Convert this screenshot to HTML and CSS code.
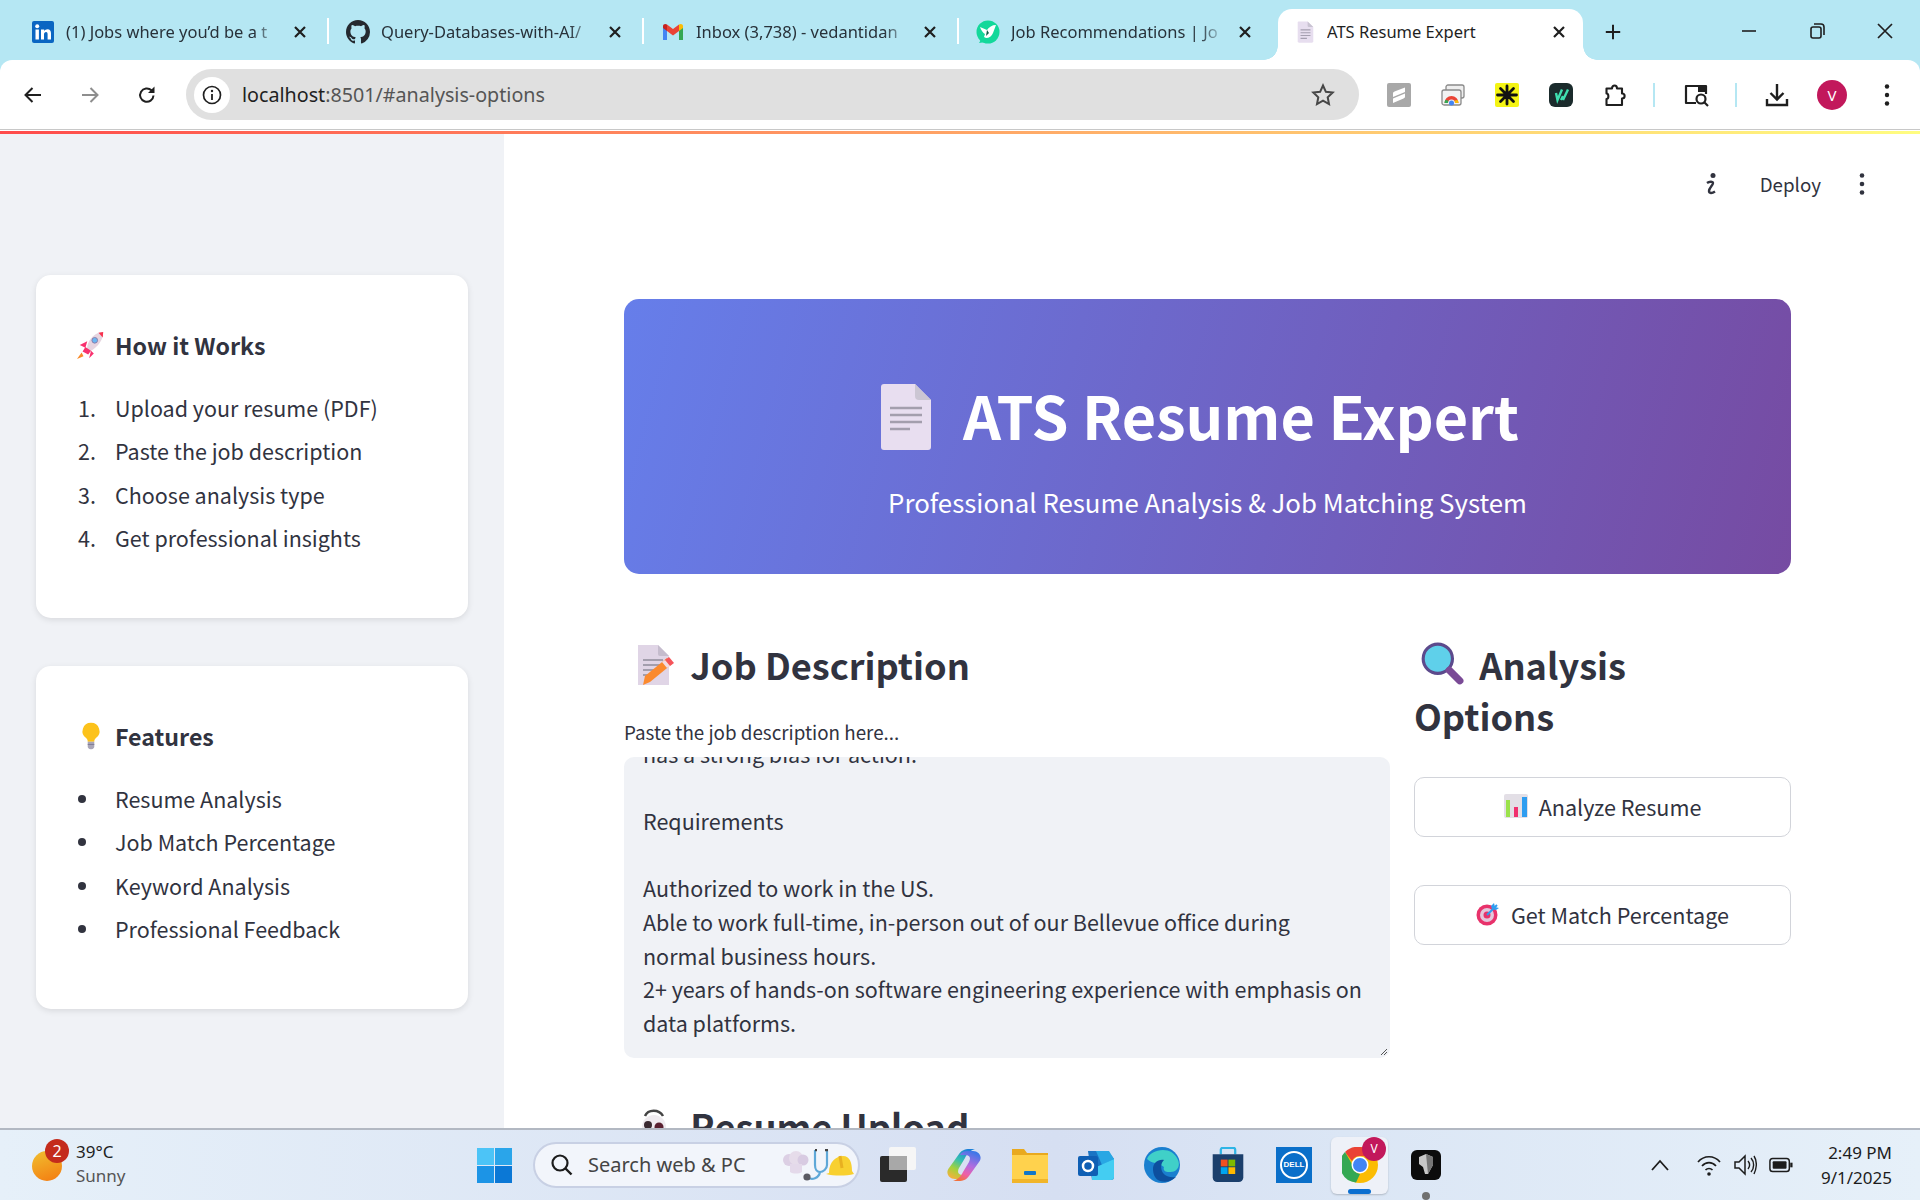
FILE: index.html
```html
<!DOCTYPE html>
<html lang="en">
<head>
<meta charset="utf-8">
<title>ATS Resume Expert</title>
<link rel="stylesheet" href="styles.css">
</head>
<body>
<div class="screen">
  <header class="tabstrip">
    <div class="tab">
      <svg class="fav" viewBox="0 0 24 24"><rect x="1" y="1" width="22" height="22" rx="2" fill="#0a66c2"/><rect x="4.500" y="9.500" width="3.400" height="10" fill="#fff"/><circle cx="6.200" cy="6.200" r="2" fill="#fff"/><path d="M10 9.500h3.200v1.500c.7-1.100 1.900-1.800 3.200-1.800 2.700 0 3.600 1.700 3.600 4.300v6h-3.400v-5.300c0-1.300-.3-2.300-1.500-2.300-1.300 0-2.100.9-2.100 2.400v5.200H10z" fill="#fff"/></svg>
      <span class="tab-title">(1) Jobs where you’d be a t</span>
      <svg class="tab-x" viewBox="0 0 14 14"><path d="M2 2l10 10M12 2L2 12" stroke="#1f1f1f" stroke-width="2.200"/></svg>
    </div>
    <div class="tab">
      <svg class="fav" viewBox="0 0 16 16"><path fill="#24292f" d="M8 0C3.580 0 0 3.580 0 8c0 3.540 2.290 6.530 5.470 7.590.4.070.55-.17.55-.38 0-.19-.01-.82-.01-1.490-2.010.37-2.530-.49-2.690-.94-.09-.23-.48-.94-.82-1.130-.28-.15-.68-.52-.01-.53.63-.01 1.080.58 1.230.82.72 1.210 1.870.87 2.330.66.070-.52.280-.87.510-1.070-1.780-.2-3.640-.89-3.640-3.950 0-.87.310-1.590.820-2.150-.08-.2-.36-1.020.08-2.120 0 0 .67-.21 2.200.82.640-.18 1.320-.27 2-.27s1.360.09 2 .27c1.530-1.040 2.200-.82 2.200-.82.440 1.100.160 1.920.080 2.120.510.560.820 1.270.820 2.150 0 3.070-1.870 3.750-3.650 3.950.290.250.540.730.540 1.480 0 1.070-.01 1.930-.01 2.200 0 .21.150.460.550.380A8.010 8.010 0 0 0 16 8c0-4.420-3.580-8-8-8z"/></svg>
      <span class="tab-title">Query-Databases-with-AI/</span>
      <svg class="tab-x" viewBox="0 0 14 14"><path d="M2 2l10 10M12 2L2 12" stroke="#1f1f1f" stroke-width="2.200"/></svg>
    </div>
    <div class="tab">
      <svg class="fav" viewBox="0 0 24 24"><path d="M2 6v14h4V10z" fill="#4285f4"/><path d="M22 6v14h-4V10z" fill="#34a853"/><path d="M18 4.500V11l4-3V6c0-1.800-2.200-2.800-4-1.500z" fill="#fbbc04"/><path d="M6 11V4.500l6 4.500 6-4.500V11l-6 4.500z" fill="#ea4335"/><path d="M2 6c0-1.800 2.200-2.800 4-1.500V11L2 8z" fill="#c5221f"/></svg>
      <span class="tab-title">Inbox (3,738) - vedantidan</span>
      <svg class="tab-x" viewBox="0 0 14 14"><path d="M2 2l10 10M12 2L2 12" stroke="#1f1f1f" stroke-width="2.200"/></svg>
    </div>
    <div class="tab">
      <svg class="fav" viewBox="0 0 24 24"><circle cx="12" cy="12" r="11.500" fill="#13d89a"/><path d="M3 23l3-5 4 4z" fill="#13d89a"/><path d="M4 7l7 3c2-3 5-5 9-5l-3 8c-1 3-4 5-7 5l-2-1 1-3c-2-1-4-4-5-7z" fill="#fff"/><path d="M11 10l2 3-3 3z" fill="#0c5c46"/></svg>
      <span class="tab-title">Job Recommendations | Jo</span>
      <svg class="tab-x" viewBox="0 0 14 14"><path d="M2 2l10 10M12 2L2 12" stroke="#1f1f1f" stroke-width="2.200"/></svg>
    </div>
    <div class="tab tab-active">
      <svg class="fav fav-doc" viewBox="0 0 24 30"><path d="M2 0h13l8 8v20a2 2 0 0 1-2 2H3a2 2 0 0 1-2-2V1z" fill="#e7deef"/><path d="M15 0l8 8h-6a2 2 0 0 1-2-2z" fill="#c9c3d2"/><path d="M5 12h14M5 16h14M5 20h14M5 24h9" stroke="#a59fb0" stroke-width="1.500"/></svg>
      <span class="tab-title">ATS Resume Expert</span>
      <svg class="tab-x" viewBox="0 0 14 14"><path d="M2 2l10 10M12 2L2 12" stroke="#1f1f1f" stroke-width="2.200"/></svg>
    </div>
    <svg class="newtab" viewBox="0 0 20 20"><path d="M10 2v16M2 10h16" stroke="#1f1f1f" stroke-width="2.200"/></svg>
    <div class="winctl">
      <svg viewBox="0 0 20 20"><path d="M3 10h14" stroke="#1f1f1f" stroke-width="1.600"/></svg>
      <svg viewBox="0 0 20 20"><rect x="4" y="6" width="10" height="11" rx="2" fill="none" stroke="#1f1f1f" stroke-width="1.600"/><path d="M7 3h7a3 3 0 0 1 3 3v8" fill="none" stroke="#1f1f1f" stroke-width="1.600"/></svg>
      <svg viewBox="0 0 20 20"><path d="M3 3l14 14M17 3L3 17" stroke="#1f1f1f" stroke-width="1.700"/></svg>
    </div>
  </header>

  <nav class="toolbar">
    <svg class="nav-ic" viewBox="0 0 20 20"><path d="M18 10H3M9.500 3L2.500 10l7 7" fill="none" stroke="#1f1f1f" stroke-width="2"/></svg>
    <svg class="nav-ic" viewBox="0 0 20 20"><path d="M2 10h15M10.500 3l7 7-7 7" fill="none" stroke="#8e8e8e" stroke-width="2"/></svg>
    <svg class="nav-ic" viewBox="0 0 20 20"><path d="M16.500 10.500a6.700 6.700 0 1 1-2-5.200" fill="none" stroke="#1f1f1f" stroke-width="2"/><path d="M17.500 1.500v6.500H11z" fill="#1f1f1f"/></svg>
    <div class="omnibox">
      <span class="site-info"><svg viewBox="0 0 20 20"><circle cx="10" cy="10" r="8.500" fill="none" stroke="#1f1f1f" stroke-width="1.700"/><path d="M10 9v6" stroke="#1f1f1f" stroke-width="1.800"/><circle cx="10" cy="6" r="1.200" fill="#1f1f1f"/></svg></span>
      <span class="url"><b>localhost</b>:8501/#analysis-options</span>
      <svg class="star" viewBox="0 0 24 24"><path d="M12 2.500l2.900 6.300 6.800.8-5 4.700 1.300 6.800-6-3.400-6 3.400 1.300-6.800-5-4.700 6.800-.8z" fill="none" stroke="#474747" stroke-width="2"/></svg>
    </div>
    <div class="exts">
      <svg class="ext" viewBox="0 0 24 24"><rect width="24" height="24" rx="2" fill="#a8a8a8"/><path d="M6 10.500c0-1 .5-1.500 1.500-2L18 4.500v4.500L6 14zM6 15.500L18 10.500v3c0 1-.5 1.500-1.500 2L6 20z" fill="#fff"/></svg>
      <svg class="ext" viewBox="0 0 24 24"><rect x="5" y="2" width="18" height="13" rx="2" fill="#eee" stroke="#8a8a8a" stroke-width="1.300"/><rect x="1" y="7" width="19" height="15" rx="2" fill="#f2f2f2" stroke="#8a8a8a" stroke-width="1.300"/><path d="M3.500 20a7 7 0 0 1 14 0h-3.500a3.500 3.500 0 0 0-7 0z" fill="#ea4335"/><path d="M14 20h3.500c0-1-.2-2-.8-3l-3 .5z" fill="#fbbc04"/><path d="M3.500 20H7l.3-2.500-3-.5c-.5 1-.8 2-.8 3z" fill="#34a853"/><circle cx="10.500" cy="20" r="2.500" fill="#4285f4"/></svg>
      <svg class="ext" viewBox="0 0 24 24"><rect width="24" height="24" rx="2" fill="#f4f414"/><path d="M12 12V3M12 12v9M12 12L5.500 5.500M12 12l6.500-6.500M12 12l-6.500 6.500M12 12l6.500 6.500M12 12H2.500M12 12h9.500" stroke="#111" stroke-width="2.800" stroke-linecap="round"/></svg>
      <svg class="ext" viewBox="0 0 24 24"><rect width="24" height="24" rx="6" fill="#1b2b2c"/><path d="M7 10l1.500 7L13 6.500M14 17l5-10.500M12 17l2-4" fill="none" stroke="#3fe0b0" stroke-width="2.400"/></svg>
      <svg class="ext" viewBox="0 0 24 24"><path d="M3.500 5.500h5.500c0-4 5-4 5 0h5v5c3.500 0 3.500 5 0 5v6.500H3.500v-6c2.500 0 2.500-5.500 0-5.500z" fill="none" stroke="#1f1f1f" stroke-width="2.100" stroke-linejoin="round"/></svg>
      <i class="tb-sep"></i>
      <svg class="ext ext-wide" viewBox="0 0 26 24"><path d="M13 20H3V3h20v8" fill="none" stroke="#1f1f1f" stroke-width="2.200" stroke-linejoin="round"/><rect x="15" y="2" width="8" height="7" fill="#1f1f1f"/><circle cx="18" cy="16" r="4.500" fill="none" stroke="#1f1f1f" stroke-width="2.200"/><path d="M21 19l4 4" stroke="#1f1f1f" stroke-width="2.200"/></svg>
      <i class="tb-sep"></i>
      <svg class="ext" viewBox="0 0 24 24"><path d="M12 1v15M5.500 10l6.500 6.500 6.500-6.500" fill="none" stroke="#1f1f1f" stroke-width="2.400"/><path d="M2 16v6h20v-6" fill="none" stroke="#1f1f1f" stroke-width="2.400"/></svg>
      <span class="avatar">V</span>
      <svg class="kebab" viewBox="0 0 6 24"><circle cx="3" cy="3.500" r="2.200" fill="#1f1f1f"/><circle cx="3" cy="12" r="2.200" fill="#1f1f1f"/><circle cx="3" cy="20.500" r="2.200" fill="#1f1f1f"/></svg>
    </div>
  </nav>

  <div class="decoration"></div>

  <div class="app">
    <aside class="sidebar">
      <section class="card">
        <h3 class="card-title">
          <svg class="card-emoji" viewBox="0 0 32 32"><path d="M12 21c-1-5 3-14 12-18l5-1c.5 8-6 16-13 20z" fill="#e6d5e0"/><path d="M24 3l5-1-.5 6z" fill="#f8314e"/><circle cx="20" cy="11" r="3" fill="#6ab7f2" stroke="#8a7aa8"/><path d="M12 12l-8 4 6 3zM16 22l-2 8 5-5zM10 18l-3 5 6 3 3-4z" fill="#f8316e"/><path d="M6 24l-5 7 7-3z" fill="#f98a28"/></svg>
          How it Works
        </h3>
        <ol class="steps numbered">
          <li>Upload your resume (PDF)</li>
          <li>Paste the job description</li>
          <li>Choose analysis type</li>
          <li>Get professional insights</li>
        </ol>
      </section>
      <section class="card">
        <h3 class="card-title">
          <svg class="card-emoji" viewBox="0 0 32 32"><path d="M16 2a9 9 0 0 0-5 16.500c1 1 1.500 2 1.500 3.500h7c0-1.500.5-2.500 1.500-3.500A9 9 0 0 0 16 2z" fill="#fcc21b"/><path d="M12.500 22h7v5a3 3 0 0 1-3 3h-1a3 3 0 0 1-3-3z" fill="#a9a6b8"/><path d="M12.500 25h7" stroke="#7c7990"/></svg>
          Features
        </h3>
        <ul class="steps bullets">
          <li>Resume Analysis</li>
          <li>Job Match Percentage</li>
          <li>Keyword Analysis</li>
          <li>Professional Feedback</li>
        </ul>
      </section>
    </aside>

    <main class="main">
      <div class="st-toolbar">
        <svg class="st-i" viewBox="0 0 14 24"><circle cx="9" cy="3.500" r="2.500" fill="#31333f"/><path d="M3 11c2-1.500 6-2 6 0 0 2-4 5-4 8 0 2.500 3 2.500 6 .5" fill="none" stroke="#31333f" stroke-width="2.400"/></svg>
        <span class="deploy">Deploy</span>
        <svg class="st-kebab" viewBox="0 0 6 24"><circle cx="3" cy="3.500" r="2.300" fill="#31333f"/><circle cx="3" cy="12" r="2.300" fill="#31333f"/><circle cx="3" cy="20.500" r="2.300" fill="#31333f"/></svg>
      </div>
      <div class="hero">
        <h1 class="hero-title">
          <svg class="hero-doc" viewBox="0 0 50 66"><path d="M3 0h31l16 16v47a3 3 0 0 1-3 3H3a3 3 0 0 1-3-3V3a3 3 0 0 1 3-3z" fill="#e8def0"/><path d="M34 0l16 16H38a4 4 0 0 1-4-4z" fill="#cbc6d3"/><path d="M9 24h32M9 31h32M9 38h32M9 45h20" stroke="#a39ead" stroke-width="2.400"/></svg>
          ATS Resume Expert
        </h1>
        <p class="hero-sub">Professional Resume Analysis &amp; Job Matching System</p>
      </div>
      <div class="columns">
        <div class="col-left">
          <h2 class="section-title">
            <svg class="h-emoji" viewBox="0 0 36 42"><path d="M2 1h20l11 11v29H2z" fill="#e0d5e6"/><path d="M22 1l11 11H24a2 2 0 0 1-2-2z" fill="#c5bccd"/><path d="M7 16h20M7 21h20M7 26h14M7 31h8" stroke="#a39ead" stroke-width="1.800"/><path d="M9 32L31 14l5 6-22 18-7 3z" fill="#fb8a2e"/><path d="M29 16l4-3 5 6-4 3z" fill="#f5545a"/><path d="M26 18l3-2 5 6-3 2z" fill="#f3dbe2"/></svg>
            Job Description
          </h2>
          <label class="field-label">Paste the job description here...</label>
          <div class="textarea">
            <div class="textarea-text">has a strong bias for action.

Requirements

Authorized to work in the US.
Able to work full-time, in-person out of our Bellevue office during normal business hours.
2+ years of hands-on software engineering experience with emphasis on data platforms.</div>
            <svg class="grip" viewBox="0 0 8 8"><path d="M7 1L1 7M7 4L4 7" stroke="#555" stroke-width="1"/></svg>
          </div>
          <h2 class="section-title upload-title">
            <svg class="h-emoji" viewBox="0 0 36 42"><circle cx="18" cy="22" r="12" fill="#efebef"/><circle cx="12" cy="20" r="4" fill="#3a2a30"/><circle cx="23" cy="22" r="4.500" fill="#5a2030"/><path d="M9 11c3-7 14-7 18 0" fill="none" stroke="#444" stroke-width="2.500"/></svg>
            Resume Upload
          </h2>
        </div>
        <div class="col-right">
          <h2 class="section-title wrap-title">
            <svg class="h-emoji lens" viewBox="0 0 44 42"><circle cx="18" cy="16" r="14" fill="#5fd0ea" stroke="#5c4a8c" stroke-width="3"/><path d="M29 27l10 10" stroke="#7a4a96" stroke-width="7" stroke-linecap="round"/></svg>
            Analysis Options
          </h2>
          <button class="btn" type="button">
            <svg class="btn-emoji" viewBox="0 0 24 24"><rect width="24" height="24" rx="2" fill="#e3dfe6"/><rect x="2" y="6" width="4" height="17" fill="#9be24b"/><rect x="10" y="13" width="4" height="10" fill="#f0306e"/><rect x="18" y="3" width="5" height="20" fill="#2e9df0"/></svg>
            Analyze Resume
          </button>
          <button class="btn" type="button">
            <svg class="btn-emoji" viewBox="0 0 24 24"><circle cx="11" cy="13" r="10.500" fill="#e8326b"/><circle cx="11" cy="13" r="7" fill="#e3c7dc"/><circle cx="11" cy="13" r="3.500" fill="#e8326b"/><path d="M11 13L21 3" stroke="#2e9df0" stroke-width="2"/><path d="M18 1l1 4 4 1-3 2-4-1-1-3z" fill="#2e9df0"/></svg>
            Get Match Percentage
          </button>
        </div>
      </div>
    </main>
  </div>

  <footer class="taskbar">
    <div class="weather">
      <span class="sun"><span class="badge">2</span></span>
      <div class="weather-text"><span>39°C</span><span class="muted">Sunny</span></div>
    </div>
    <div class="task-center">
      <span class="slot"><svg class="task-ic win" viewBox="0 0 35 35"><rect width="17" height="17" fill="#4cc4f7"/><rect x="18" width="17" height="17" fill="#2aa5ea"/><rect y="18" width="17" height="17" fill="#1c94e6"/><rect x="18" y="18" width="17" height="17" fill="#0b78d6"/></svg></span>
      <div class="search">
        <svg class="search-ic" viewBox="0 0 24 24"><circle cx="10" cy="10" r="7.500" fill="none" stroke="#1c1c1c" stroke-width="2.200"/><path d="M15.500 15.500l6 6" stroke="#1c1c1c" stroke-width="2.400"/></svg>
        <span class="search-text">Search web &amp; PC</span>
        <svg class="search-art" viewBox="0 0 71 32"><circle cx="6" cy="11" r="6" fill="#dccfe4"/><circle cx="13" cy="9" r="7" fill="#e6dcea"/><circle cx="20" cy="11" r="5.500" fill="#d8cbe2"/><path d="M7 15h12v8c-3 2-9 2-12 0z" fill="#e4d9ea"/><path d="M32 1v15c0 4 2 7 5 7s7-3 7-7V1" fill="none" stroke="#5fa8d8" stroke-width="2.200"/><path d="M32 1h2M42 1h3" stroke="#444" stroke-width="2.500"/><path d="M37 23c-1 6-8 9-13 5" fill="none" stroke="#5fa8d8" stroke-width="2.200"/><circle cx="24" cy="28" r="3.600" fill="#5a5a62"/><path d="M46 24C46 12 54 7 60 7c7 0 9 7 9 15l2 3c-8 2-20 2-28 0z" fill="#f8d030"/><path d="M57 7l2 12" stroke="#e8b020" stroke-width="3"/></svg>
      </div>
      <span class="slot"><svg class="task-ic" viewBox="0 0 36 36"><rect x="9" y="0" width="27" height="23" rx="2" fill="#f6f6f6"/><rect x="0" y="9" width="27" height="26" rx="2" fill="#2a2a2a"/><rect x="9" y="9" width="18" height="14" fill="#a8a8a8"/></svg></span>
      <span class="slot"><svg class="task-ic" viewBox="0 0 36 36"><defs><linearGradient id="cpA" x1="0.700" y1="0" x2="0.200" y2="1"><stop offset="0" stop-color="#1b7fd8"/><stop offset=".4" stop-color="#35c0b0"/><stop offset=".7" stop-color="#a4d23c"/><stop offset="1" stop-color="#f5b03c"/></linearGradient><linearGradient id="cpB" x1="0.700" y1="0" x2="0.300" y2="1"><stop offset="0" stop-color="#3a78e8"/><stop offset=".45" stop-color="#b06ce0"/><stop offset=".75" stop-color="#ee5fa8"/><stop offset="1" stop-color="#f2703c"/></linearGradient></defs><path d="M24 2c-6 0-9 2-11 5L3 21c-4 5 0 11 6 11h6c3 0 5-1 7-4h-5c-5 0-6-3-4-7l6-10c2-4 4-7 10-9z" fill="url(#cpA)"/><path d="M12 34c6 0 9-2 11-5l10-14c4-5 0-11-6-11h-6c-3 0-5 1-7 4h5c5 0 6 3 4 7l-6 10c-2 4-4 7-10 9z" fill="url(#cpB)"/></svg></span>
      <span class="slot"><svg class="task-ic" viewBox="0 0 36 36"><path d="M0 2h12l3 4h21v30H0z" fill="#e9a91e"/><path d="M0 8h36v28H0z" fill="#ffd24d"/><rect x="12" y="24" width="12" height="4" rx="1" fill="#1177c8"/><rect x="0" y="32" width="36" height="4" fill="#f1b52a"/></svg></span>
      <span class="slot"><svg class="task-ic" viewBox="0 0 36 36"><path d="M10 4h20l6 8v18a3 3 0 0 1-3 3H14z" fill="#1a74c4"/><path d="M18 4h13l5 8-12 6z" fill="#28a7e4"/><path d="M14 22l22-10v18a3 3 0 0 1-3 3H14z" fill="#44cdf2"/><rect y="9" width="20" height="20" rx="2" fill="#0f5fb4"/><circle cx="10" cy="19" r="5" fill="none" stroke="#fff" stroke-width="2.500"/></svg></span>
      <span class="slot"><svg class="task-ic" viewBox="0 0 36 36"><circle cx="18" cy="18" r="18" fill="#1a7fcf"/><path d="M3 12C7 2 28-2 34 13c3 7-2 13-9 12-5 0-6-3-5-5-6-5-12-3-17-8z" fill="#40d0c8"/><path d="M9 22c0-6 5-10 11-9-3 3-4 8-1 13 3 4 9 5 13 4-5 5-13 6-18 3-3-2-5-6-5-11z" fill="#0d4f9e"/></svg></span>
      <span class="slot"><svg class="task-ic" viewBox="0 0 36 40"><path d="M10 8V3a2 2 0 0 1 2-2h12a2 2 0 0 1 2 2v5" fill="none" stroke="#2fb5e6" stroke-width="2.500"/><path d="M1 8h34v26a5 5 0 0 1-5 5H6a5 5 0 0 1-5-5z" fill="#1b3f6c"/><rect x="10" y="14" width="7.500" height="7.500" fill="#f25022"/><rect x="18.500" y="14" width="7.500" height="7.500" fill="#7fba00"/><rect x="10" y="22.500" width="7.500" height="7.500" fill="#00a4ef"/><rect x="18.500" y="22.500" width="7.500" height="7.500" fill="#ffb900"/></svg></span>
      <span class="slot"><span class="dell"><span class="dell-ring">DELL</span></span></span>
      <span class="slot slot-active">
        <svg class="task-ic" viewBox="0 0 36 36"><circle cx="18" cy="18" r="18" fill="#fbbc04"/><path d="M18 0a18 18 0 0 1 15.600 9H18a9 9 0 0 0-8 5L3 5A18 18 0 0 1 18 0z" fill="#ea4335"/><path d="M3 5l7.500 13a9 9 0 0 0 7.500 9l-4 8.500A18 18 0 0 1 3 5z" fill="#34a853"/><circle cx="18" cy="18" r="8.500" fill="#fff"/><circle cx="18" cy="18" r="7" fill="#4285f4"/></svg>
        <span class="task-avatar">V</span>
        <i class="run-pill"></i>
      </span>
      <span class="slot slot-open">
        <svg class="task-ic black-app" viewBox="0 0 30 30"><rect width="30" height="30" rx="6" fill="#0c0c0c"/><path d="M8 7l7-3 7 3v8l-5 9h-3l-2-7-4-3z" fill="#c8c8c8"/><path d="M15 4l7 3v8l-5 9z" fill="#777"/></svg>
        <i class="run-dot"></i>
      </span>
    </div>
    <div class="tray">
      <svg class="tray-chev" viewBox="0 0 18 12"><path d="M1 11l8-9 8 9" fill="none" stroke="#1c1c1c" stroke-width="1.800"/></svg>
      <svg class="tray-ic" viewBox="0 0 24 24"><path d="M1 9c6-7 16-7 22 0M5 13c4-4.500 10-4.500 14 0M8.500 17c2-2 5-2 7 0" fill="none" stroke="#1c1c1c" stroke-width="1.700"/><circle cx="12" cy="21" r="1.800" fill="#1c1c1c"/></svg>
      <svg class="tray-ic" viewBox="0 0 24 24"><path d="M2 9h4l6-6v18l-6-6H2z" fill="none" stroke="#1c1c1c" stroke-width="1.500"/><path d="M15 8c2 2.500 2 5.500 0 8M18 5c3.500 4 3.500 10 0 14M21 3c4 6 2 14 0 18" fill="none" stroke="#1c1c1c" stroke-width="1.400"/></svg>
      <svg class="tray-ic" viewBox="0 0 26 24"><rect x="1" y="5" width="21" height="14" rx="3" fill="none" stroke="#1c1c1c" stroke-width="1.600"/><rect x="4" y="8" width="15" height="8" rx="1" fill="#1c1c1c"/><rect x="23" y="9.500" width="2.500" height="5" fill="#1c1c1c"/></svg>
      <div class="clock"><span>2:49 PM</span><span>9/1/2025</span></div>
    </div>
  </footer>
</div>
</body>
</html>
```

FILE: styles.css
```css
* { box-sizing: border-box; }
html, body { margin: 0; padding: 0; }
body { font-family: "Noto Sans", "Liberation Sans", sans-serif; color: #1f1f1f; background: #fff; }
.screen { width: 1920px; height: 1200px; display: flex; flex-direction: column; overflow: hidden; background: #b5e7f3; }

/* Tab strip */
.tabstrip { height: 60px; flex: none; background: #b5e7f3; display: flex; align-items: flex-start; padding-left: 14px; }
.tab { width: 315px; height: 51px; margin-top: 9px; display: flex; align-items: center; padding: 0 0 5px 17px; position: relative; }
.tab:not(.tab-active):not(:nth-child(4))::after { content: ""; position: absolute; right: 0; top: 9px; width: 2px; height: 26px; background: #fff; }
.fav { width: 24px; height: 24px; flex: none; }
.fav-doc { width: 17px; height: 22px; margin: 0 3px; }
.tab-title { width: 214px; margin-left: 11px; flex: none; white-space: nowrap; overflow: hidden; font-size: 16.500px; line-height: 24px; color: #28323a; -webkit-mask-image: linear-gradient(to right, #000 88%, transparent 100%); mask-image: linear-gradient(to right, #000 88%, transparent 100%); }
.tab-x { width: 14px; height: 14px; margin-left: 13px; flex: none; }
.tab-active { width: 305px; margin-left: 4px; background: #fff; border-radius: 14px 14px 0 0; padding-left: 16px; }
.tab-active::before, .tab-active::after { content: ""; position: absolute; bottom: 0; width: 14px; height: 14px; }
.tab-active::before { left: -14px; background: radial-gradient(circle at 0 0, #b5e7f3 13.500px, #fff 14px); }
.tab-active::after { right: -14px; background: radial-gradient(circle at 100% 0, #b5e7f3 13.500px, #fff 14px); }
.tab-active .tab-title { width: 215px; margin-left: 10px; -webkit-mask-image: none; mask-image: none; color: #1f1f1f; }
.tab-active .tab-x { margin-left: 10px; }
.newtab { width: 18px; height: 18px; margin: 23px 0 0 21px; flex: none; }
.winctl { margin-left: auto; display: flex; padding-right: 25px; gap: 48px; margin-top: 21px; }
.winctl svg { width: 20px; height: 20px; display: block; }

/* Toolbar */
.toolbar { height: 69px; flex: none; background: #fff; display: flex; align-items: center; padding-left: 23px; border-radius: 12px 12px 0 0; }
.nav-ic { width: 20px; height: 20px; margin-right: 37px; flex: none; }
.nav-ic:nth-child(3) { margin-right: 29px; }
.omnibox { width: 1173px; height: 51px; background: #e0e0e0; border-radius: 26px; display: flex; align-items: center; padding-left: 8px; flex: none; }
.site-info { width: 36px; height: 36px; background: #fff; border-radius: 50%; display: flex; align-items: center; justify-content: center; flex: none; }
.site-info svg { width: 20px; height: 20px; }
.url { margin-left: 12px; font-size: 19.700px; color: #555; }
.url b { font-weight: 400; color: #1f1f1f; }
.star { width: 24px; height: 24px; margin-left: auto; margin-right: 24px; }
.exts { display: flex; align-items: center; margin-left: 28px; }
.ext { width: 24px; height: 24px; flex: none; margin-right: 30px; }
.ext-wide { width: 26px; }
.tb-sep { width: 2px; height: 24px; background: #b5e7f3; margin: 0 28px 0 -4px; flex: none; }
.avatar { width: 30px; height: 30px; border-radius: 50%; background: #c2185b; color: #fff; font-size: 15px; display: flex; align-items: center; justify-content: center; margin-left: -2px; flex: none; }
.kebab { width: 6px; height: 24px; margin-left: 37px; }

.decoration { height: 5px; flex: none; background: linear-gradient(#c8c8c8 0 1px, #fff 1px 2px, transparent 2px), linear-gradient(to right, #ff4b4b, #fffd80); }

/* App */
.app { flex: 1; min-height: 0; display: flex; font-family: "Noto Sans CJK JP", "Noto Sans", sans-serif; color: #31333f; overflow: hidden; background: #fff; }
.sidebar { width: 504px; flex: none; background: #f0f2f6; padding: 141px 36px 0; display: flex; flex-direction: column; gap: 48px; }
.card { height: 343px; background: #fff; border-radius: 15px; box-shadow: 0 2px 6px rgba(0,0,0,.1); padding: 52px 40px 0; }
.card-title { margin: 0 0 23px; font-size: 23.200px; line-height: 36px; font-weight: 600; display: flex; align-items: center; gap: 9px; }
.card-emoji { width: 30px; height: 30px; flex: none; }
.steps { margin: 0; padding: 0 0 0 2px; font-size: 21.500px; line-height: 43.400px; list-style: none; }
.steps li { display: flex; align-items: center; }
.numbered { counter-reset: step; }
.numbered li { counter-increment: step; }
.numbered li::before { content: counter(step) "."; width: 37px; flex: none; }
.bullets li::before { content: ""; width: 8px; height: 8px; border-radius: 50%; background: #31333f; margin: 0 29px 0 0; flex: none; }

.main { flex: 1; min-width: 0; padding: 0 129px 0 120px; }
.st-toolbar { height: 165px; display: flex; align-items: flex-start; justify-content: flex-end; padding-top: 38px; margin-right: -129px; padding-right: 55px; }
.st-i { width: 14px; height: 24px; }
.deploy { font-size: 18.750px; line-height: 24px; margin-left: 42px; }
.st-kebab { width: 6px; height: 24px; margin-left: 38px; }
.hero { height: 275px; border-radius: 15px; background: linear-gradient(105deg, #667eea, #764ba2); color: #fff; text-align: center; padding-top: 75px; }
.hero-title { margin: 0; font-size: 59.300px; line-height: 80px; font-weight: 700; display: flex; align-items: center; justify-content: center; gap: 31px; padding-right: 16px; }
.hero-doc { width: 52px; height: 66px; flex: none; margin-top: 5px; }
.hero-sub { margin: 28px 0 0; font-size: 25.800px; line-height: 40px; }
.columns { display: grid; grid-template-columns: 766px 377px; gap: 24px; margin-top: 65px; }
.section-title { margin: 0; font-size: 36.200px; line-height: 51px; font-weight: 600; }
.h-emoji { width: 40px; height: 42px; vertical-align: -6px; margin: 0 8px 0 10px; }
.lens { width: 46px; height: 44px; margin: 0 6px 0 5px; }
.field-label { display: block; margin-top: 28px; font-size: 18.800px; line-height: 28px; }
.textarea { height: 301px; margin-top: 11px; background: #f0f2f6; border-radius: 10px; padding: 0 26px 0 19px; overflow: hidden; position: relative; font-size: 21.500px; line-height: 33.600px; }
.textarea-text { white-space: pre-wrap; margin-top: -20px; }
.grip { position: absolute; right: 2px; bottom: 2px; width: 8px; height: 8px; }
.upload-title { margin-top: 42px; }
.btn { display: flex; width: 100%; height: 60px; align-items: center; justify-content: center; gap: 11px; padding: 0 0 2px; background: #fff; border: 1px solid #d2d4da; border-radius: 10px; font: inherit; font-size: 21.600px; color: #31333f; margin-bottom: 48px; }
.wrap-title { margin-bottom: 36px; max-width: 280px; }
.btn-emoji { width: 24px; height: 24px; flex: none; }

/* Taskbar */
.taskbar { height: 72px; flex: none; background: linear-gradient(90deg, #e6f0f9 0%, #d6dff2 55%, #dbe6f5 70%, #e6f0f9 100%); border-top: 2px solid #b2b8c2; display: flex; align-items: center; }
.weather { width: 461px; padding-left: 32px; display: flex; align-items: center; flex: none; }
.sun { width: 30px; height: 30px; border-radius: 50%; background: linear-gradient(160deg, #f0c030, #f47a10); position: relative; flex: none; margin-top: 2px; }
.badge { position: absolute; left: 13px; top: -12px; width: 24px; height: 24px; background: #c42b1c; color: #fff; border-radius: 50%; font-size: 16px; line-height: 24px; text-align: center; }
.weather-text { margin: -2px 0 0 14px; display: flex; flex-direction: column; font-size: 17px; line-height: 24.500px; }
.muted { color: #555; }
.task-center { display: flex; align-items: center; flex: none; }
.slot { width: 66px; height: 70px; display: flex; align-items: center; justify-content: center; flex: none; position: relative; }
.task-ic { width: 36px; height: 36px; }
.win { width: 35px; height: 35px; }
.black-app { width: 30px; height: 30px; }
.search { width: 327px; height: 46px; margin: 0 5px 0 6px; flex: none; background: #f2f5fb; border: 2px solid #c8d0e4; border-radius: 23px; display: flex; align-items: center; padding: 0 0 1px 15px; }
.search-ic { width: 24px; height: 24px; flex: none; }
.search-text { margin-left: 14px; font-size: 20px; color: #444; }
.search-art { width: 71px; height: 32px; margin-left: auto; margin-right: 4px; }
.dell { width: 36px; height: 36px; background: #0a6fc9; display: flex; align-items: center; justify-content: center; }
.dell-ring { width: 28px; height: 28px; border: 2px solid #fff; border-radius: 50%; color: #fff; font: 700 8px/24px "Liberation Sans", sans-serif; text-align: center; }
.slot-active { background: #eef1f8; border-radius: 6px; width: 57px; height: 57px; margin: 0 5px 0 4px; box-shadow: 0 1px 2px rgba(0,0,0,.2); }
.task-avatar { position: absolute; right: 2px; top: 0; width: 24px; height: 24px; border-radius: 50%; background: #c2185b; color: #fff; font-size: 12px; line-height: 24px; text-align: center; }
.run-pill { position: absolute; bottom: 0; left: 17px; width: 23px; height: 5px; border-radius: 3px; background: #0b6fd0; }
.run-dot { position: absolute; bottom: 0; left: 29px; width: 8px; height: 8px; border-radius: 50%; background: #707070; }
.tray { margin-left: auto; display: flex; align-items: center; padding-right: 28px; }
.tray-chev { width: 18px; height: 12px; margin-right: 28px; }
.tray-ic { width: 24px; height: 24px; margin-right: 12px; }
.clock { display: flex; flex-direction: column; align-items: flex-end; font-size: 17px; line-height: 25px; margin-left: 10px; color: #1c1c1c; width: 77px; }
```
